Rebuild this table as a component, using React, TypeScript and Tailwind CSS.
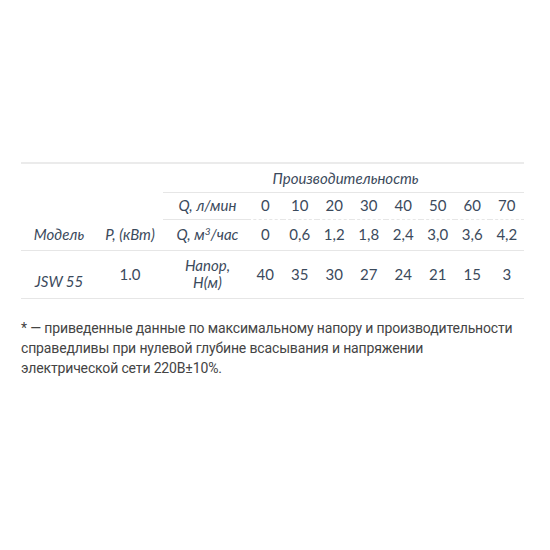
const flow = ["0", "10", "20", "30", "40", "50", "60", "70"]
const hour = ["0", "0,6", "1,2", "1,8", "2,4", "3,0", "3,6", "4,2"]
const head = ["40", "35", "30", "27", "24", "21", "15", "3"]

export default function App() {
  return (
    <div className="w-[550px] h-[550px] bg-white pt-[162px] px-[21px]">
      <table
        className="w-[503px] border-collapse table-fixed text-[15px] text-[#3b4a5c]"
        style={{ fontFamily: "Lato, 'Noto Sans', sans-serif" }}
      >
        <colgroup>
          <col className="w-[76px]" />
          <col className="w-[66px]" />
          <col className="w-[85px]" />
          {flow.map((_, i) => (
            <col key={i} className="w-[34.5px]" />
          ))}
        </colgroup>
        <tbody>
          <tr className="h-[29px] border-t-2 border-[#ebebeb]">
            <td rowSpan={3} className="align-bottom text-center italic pb-[4px]">Модель</td>
            <td rowSpan={3} className="align-bottom text-center italic pb-[4px]">P, (кВт)</td>
            <td colSpan={9} className="text-center italic pl-[4px] border-b border-[#e6e6e6]">
              Производительность
            </td>
          </tr>
          <tr className="h-[27px]">
            <td className="text-center italic pl-[4px] border-b border-[#e6e6e6]">Q, л/мин</td>
            {flow.map((v, i) => (
              <td key={i} className="text-center border-b border-dashed border-[#e6e6e6]">{v}</td>
            ))}
          </tr>
          <tr className="h-[31px] border-b border-[#e6e6e6]">
            <td className="text-center italic pl-[4px] whitespace-nowrap">
              Q, м<sup className="text-[10px]">3</sup>/час
            </td>
            {hour.map((v, i) => (
              <td key={i} className="text-center">{v}</td>
            ))}
          </tr>
          <tr className="h-[48px] border-b border-[#e6e6e6]">
            <td className="align-bottom text-center italic pb-[5px]">JSW 55</td>
            <td className="text-center">1.0</td>
            <td className="text-center italic pl-[4px] leading-[17px]">
              Напор,
              <br />
              H(м)
            </td>
            {head.map((v, i) => (
              <td key={i} className="text-center">{v}</td>
            ))}
          </tr>
        </tbody>
      </table>
      <p
        className="mt-[19px] w-[510px] text-[14px] leading-[20px] tracking-[-0.15px] text-[#444]"
        style={{ fontFamily: "Roboto, 'Noto Sans', sans-serif" }}
      >
        * — приведенные данные по максимальному напору и производительности справедливы при нулевой
        глубине всасывания и напряжении
        <br />
        электрической сети 220В±10%.
      </p>
    </div>
  )
}
